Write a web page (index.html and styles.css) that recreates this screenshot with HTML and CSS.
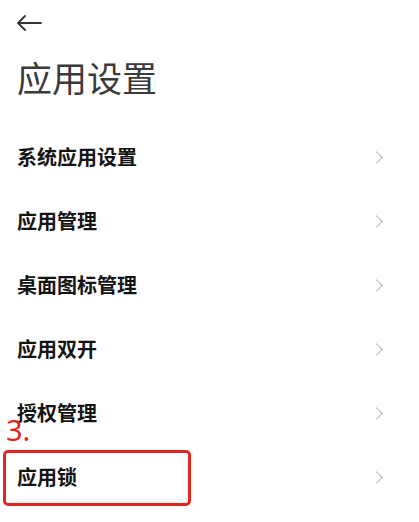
FILE: index.html
```html
<!DOCTYPE html>
<html lang="zh">
<head>
<meta charset="utf-8">
<link rel="stylesheet" href="styles.css">
</head>
<body>
<div class="page">
  <div class="topbar">
    <svg class="back" width="26" height="16" viewBox="0 0 26 16">
      <path d="M2 8 H25 M9 1 L2 8 L9 15" fill="none" stroke="#333" stroke-width="1.8" stroke-linecap="round" stroke-linejoin="round"/>
    </svg>
  </div>
  <h1 class="title">应用设置</h1>
  <ul class="list">
    <li class="row"><span class="label">系统应用设置</span><span class="chev"></span></li>
    <li class="row"><span class="label">应用管理</span><span class="chev"></span></li>
    <li class="row"><span class="label">桌面图标管理</span><span class="chev"></span></li>
    <li class="row"><span class="label">应用双开</span><span class="chev"></span></li>
    <li class="row"><span class="label">授权管理</span><span class="chev"></span></li>
    <li class="row marked"><span class="step">3.</span><span class="box"></span><span class="label">应用锁</span><span class="chev"></span></li>
  </ul>
</div>
</body>
</html>
```
FILE: styles.css
```css
html, body {
  margin: 0;
  padding: 0;
  background: #fff;
}
body {
  font-family: "Noto Sans CJK SC", "Noto Sans", sans-serif;
  color: #111;
}
.page {
  width: 419px;
  height: 522px;
  overflow: hidden;
}
.topbar {
  height: 46px;
  display: flex;
  align-items: center;
  padding-left: 16px;
}
.back {
  display: block;
}
.title {
  margin: 0;
  padding-left: 17px;
  font-size: 35px;
  font-weight: 400;
  color: #3a3a3a;
  line-height: 50px;
  height: 79px;
  padding-top: 0;
  box-sizing: border-box;
  padding-top: 6px;
}
.list {
  list-style: none;
  margin: 0;
  padding: 0;
}
.row {
  position: relative;
  height: 64px;
  display: flex;
  align-items: center;
  justify-content: space-between;
  padding: 0 38px 0 17px;
}
.label {
  font-size: 20px;
  font-weight: 700;
  color: #141414;
  line-height: 1;
}
.chev {
  width: 8px;
  height: 8px;
  border-top: 1.3px solid #b5b5b5;
  border-right: 1.3px solid #b5b5b5;
  transform: rotate(45deg);
}
.step {
  position: absolute;
  left: 6px;
  top: -30px;
  font-family: "Noto Sans", sans-serif;
  font-size: 29px;
  line-height: 1;
  color: #e8231f;
  font-weight: 400;
}
.box {
  position: absolute;
  left: 3px;
  top: 5px;
  width: 188px;
  height: 56px;
  box-sizing: border-box;
  border: 3px solid #e52420;
  border-radius: 5px;
}
```
